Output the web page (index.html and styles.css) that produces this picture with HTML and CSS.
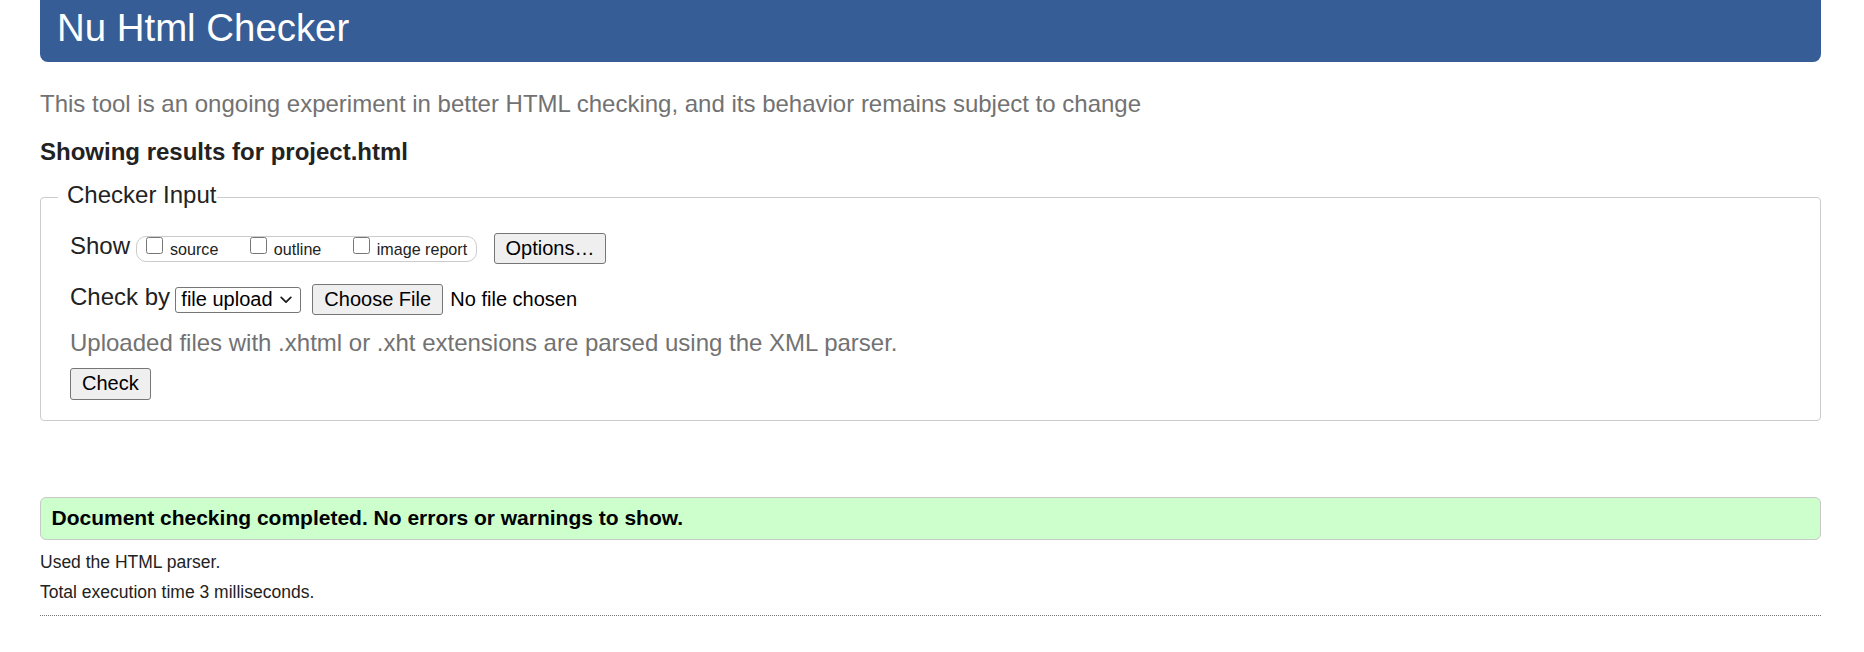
FILE: index.html
```
<!DOCTYPE html>
<html lang="en">
<head>
<meta charset="utf-8">
<title>Showing results for project.html - Nu Html Checker</title>
<link rel="stylesheet" href="styles.css">
</head>
<body>
<header class="masthead"><h1 class="title">Nu Html Checker</h1></header>
<p class="about">This tool is an ongoing experiment in better HTML checking, and its behavior remains subject to change</p>
<h2 class="results-for">Showing results for project.html</h2>
<form class="checker">
  <fieldset class="input-box">
    <legend class="input-legend">Checker Input</legend>
    <div class="inner">
      <div class="row row-show">
        <span class="row-label">Show</span>
        <span class="opts-group">
          <label class="opt"><input type="checkbox" class="opt-box"><span class="opt-text">source</span></label>
          <label class="opt"><input type="checkbox" class="opt-box"><span class="opt-text">outline</span></label>
          <label class="opt"><input type="checkbox" class="opt-box"><span class="opt-text">image report</span></label>
        </span>
        <button type="button" class="btn btn-options">Options…</button>
      </div>
      <div class="row row-check">
        <span class="row-label">Check by</span>
        <span class="select">
          <span class="select-text">file upload</span>
          <svg class="chevron" width="12" height="8" viewBox="0 0 12 8"><path d="M1.2 1.4 L6 6.2 L10.8 1.4" fill="none" stroke="#1a1a1a" stroke-width="1.7" stroke-linecap="round" stroke-linejoin="round"/></svg>
        </span>
        <span class="btn btn-file">Choose File</span>
        <span class="file-status">No file chosen</span>
      </div>
      <p class="note">Uploaded files with .xhtml or .xht extensions are parsed using the XML parser.</p>
      <div class="row row-submit">
        <button type="button" class="btn btn-check">Check</button>
      </div>
    </div>
  </fieldset>
</form>
<div class="success">Document checking completed. No errors or warnings to show.</div>
<p class="meta meta-first">Used the HTML parser.</p>
<p class="meta meta-second">Total execution time 3 milliseconds.</p>
<hr class="rule">
</body>
</html>
```
FILE: styles.css
```
html, body {
  background: #ffffff;
}

body {
  margin: 0;
  padding: 0 43px 0 40px;
  font-family: "Liberation Sans", Arial, sans-serif;
  color: #222222;
}

.masthead {
  margin: 0;
}

.title {
  margin: 0;
  background: #365d96;
  color: #ffffff;
  font-weight: normal;
  font-size: 38.4px;
  line-height: 44px;
  padding: 6px 17px 12px;
  border-radius: 0 0 8px 8px;
}

.about {
  margin: 28px 0 0;
  font-size: 24px;
  line-height: 27.6px;
  color: #727272;
}

.results-for {
  margin: 20px 0 0;
  font-size: 24px;
  line-height: 27.6px;
  font-weight: bold;
  color: #222222;
}

.checker {
  margin: 16.3px 0 0;
}

.input-box {
  margin: 0;
  min-width: 0;
  border: 1px solid #cccccc;
  border-radius: 4px;
  padding: 20px 0 20px 17px;
}

.input-legend {
  font-size: 24px;
  line-height: 27.6px;
  padding: 0 1px 4px 9px;
  color: #222222;
}

.inner {
  padding-left: 12px;
}

.row {
  display: flex;
  align-items: center;
}

.row-show {
  height: 31px;
}

.row-check {
  height: 31px;
  margin-top: 20px;
}

.row-label {
  font-size: 24px;
  line-height: 27.6px;
  margin-bottom: 5px;
  color: #222222;
}

.opts-group {
  display: inline-flex;
  align-items: flex-end;
  margin-left: 6px;
  border: 1px solid #cccccc;
  border-radius: 10px;
  padding: 0 9px 2px 9px;
}

.opt {
  display: inline-flex;
  align-items: flex-end;
  height: 22px;
}

.opt + .opt {
  margin-left: 31.5px;
}

.opt-box {
  width: 17px;
  height: 17px;
  margin: 0 7px 5px 0;
}

.opt-text {
  font-size: 16.1px;
  line-height: 18.4px;
  color: #222222;
}

.btn {
  box-sizing: border-box;
  display: inline-flex;
  align-items: center;
  height: 31px;
  padding: 0 11px;
  font-family: "Liberation Sans", Arial, sans-serif;
  font-size: 20px;
  color: #000000;
  background: #efefef;
  border: 1px solid #767676;
  border-radius: 3px;
}

.btn-options {
  margin-left: 16.4px;
}

.select {
  box-sizing: border-box;
  display: inline-flex;
  align-items: center;
  justify-content: space-between;
  width: 126px;
  height: 26px;
  margin-left: 4.7px;
  padding: 0 7.5px 0 5.6px;
  border: 1px solid #767676;
  border-radius: 3px;
  background: #ffffff;
  font-size: 20px;
  color: #000000;
}

.chevron {
  display: block;
}

.btn-file {
  margin-left: 11.6px;
}

.file-status {
  margin-left: 7.3px;
  font-size: 20px;
  color: #000000;
}

.note {
  margin: 14px 0 0;
  font-size: 24px;
  line-height: 27.6px;
  color: #727272;
}

.row-submit {
  margin-top: 11.2px;
}

.btn-check {
  height: 32px;
}

.success {
  margin-top: 76px;
  padding: 8px 10.5px 9px;
  background: #ccffcc;
  border: 1px solid #c8c8c8;
  border-radius: 6px;
  font-size: 21px;
  font-weight: bold;
  color: #000000;
}

.meta {
  margin: 0;
  font-size: 17.5px;
  line-height: 20.1px;
  color: #222222;
}

.meta-first {
  margin-top: 12px;
}

.meta-second {
  margin-top: 10.2px;
}

.rule {
  margin: 12.7px 0 0;
  height: 0;
  border: 0;
  border-top: 1px dotted #777777;
}
```
